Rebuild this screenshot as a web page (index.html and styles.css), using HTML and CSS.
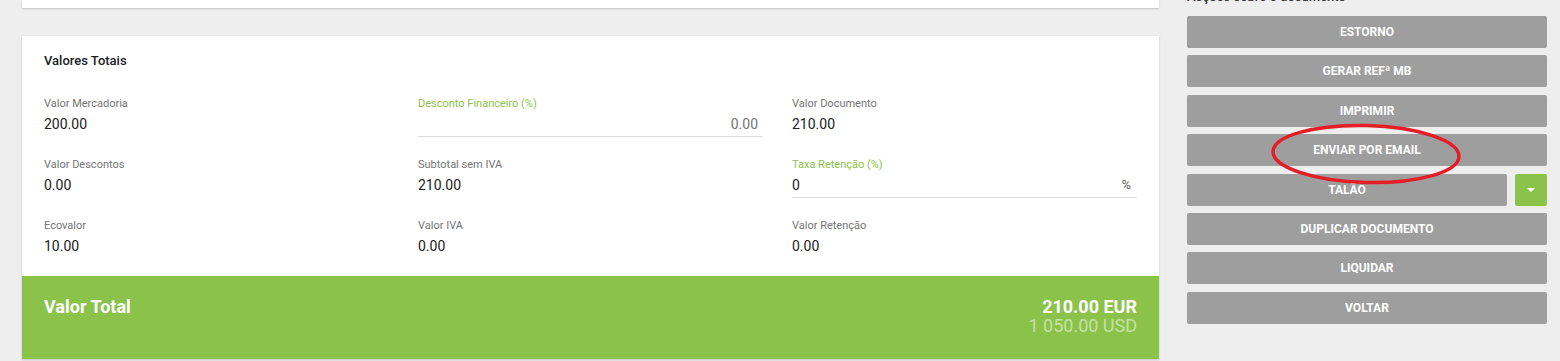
FILE: index.html
```html
<!DOCTYPE html>
<html lang="pt">
<head>
  <meta charset="UTF-8" />
  <title>Documento – Valores Totais</title>
  <link rel="stylesheet" href="styles.css">
</head>
<body>
  <div class="page">
    <div class="content">
      <div class="card card-top"></div>

      <div class="card totals">
        <div class="totals-body">
          <h3 class="card-title">Valores Totais</h3>
          <div class="fields">
            <div class="field">
              <div class="field-label">Valor Mercadoria</div>
              <div class="field-value">200.00</div>
            </div>
            <div class="field input">
              <div class="field-label green">Desconto Financeiro (%)</div>
              <div class="field-value muted right">0.00</div>
            </div>
            <div class="field">
              <div class="field-label">Valor Documento</div>
              <div class="field-value">210.00</div>
            </div>

            <div class="field">
              <div class="field-label">Valor Descontos</div>
              <div class="field-value">0.00</div>
            </div>
            <div class="field">
              <div class="field-label">Subtotal sem IVA</div>
              <div class="field-value">210.00</div>
            </div>
            <div class="field input">
              <div class="field-label green">Taxa Retenção (%)</div>
              <div class="field-value split"><span>0</span><span class="unit">%</span></div>
            </div>

            <div class="field">
              <div class="field-label">Ecovalor</div>
              <div class="field-value">10.00</div>
            </div>
            <div class="field">
              <div class="field-label">Valor IVA</div>
              <div class="field-value">0.00</div>
            </div>
            <div class="field">
              <div class="field-label">Valor Retenção</div>
              <div class="field-value">0.00</div>
            </div>
          </div>
        </div>

        <div class="total-bar">
          <div class="total-title">Valor Total</div>
          <div class="total-amounts">
            <div class="amount-main">210.00 EUR</div>
            <div class="amount-alt">1 050.00 USD</div>
          </div>
        </div>
      </div>
    </div>

    <div class="actions">
      <h4 class="actions-title">Acções sobre o documento</h4>
      <button class="action-btn">Estorno</button>
      <button class="action-btn">Gerar Refª MB</button>
      <button class="action-btn">Imprimir</button>
      <button class="action-btn">Enviar por email</button>
      <div class="btn-group">
        <button class="action-btn">Talão</button>
        <button class="drop-btn"><span class="caret"></span></button>
      </div>
      <button class="action-btn">Duplicar documento</button>
      <button class="action-btn">Liquidar</button>
      <button class="action-btn">Voltar</button>

      <svg class="mark" width="200" height="70" viewBox="0 0 200 70">
        <ellipse cx="100" cy="35" rx="93" ry="28.5" fill="none" stroke="#e31e26" stroke-width="3.5" transform="rotate(1.5 100 35)"/>
      </svg>
    </div>
  </div>
</body>
</html>
```

FILE: styles.css
```css
* { box-sizing: border-box; margin: 0; padding: 0; }
body {
  font-family: Roboto, 'Liberation Sans', sans-serif;
  background: #eeeeee;
  color: #212121;
  height: 100vh;
  overflow: hidden;
}

.page {
  display: flex;
  gap: 28px;
  padding-left: 22px;
}

.content {
  width: 1137px;
  display: flex;
  flex-direction: column;
  gap: 28px;
}
.card {
  background: #fff;
  box-shadow: 0 1px 2px rgba(0, 0, 0, 0.18);
}
.card-top { height: 8px; }

.totals-body { padding: 16px 22px 17px; }
.card-title {
  font-size: 13px;
  line-height: 17px;
  font-weight: 500;
  color: #212121;
  margin-bottom: 28px;
}
.fields {
  display: grid;
  grid-template-columns: repeat(3, 345px);
  column-gap: 29px;
  row-gap: 21px;
}
.field {
  border-bottom: 1px solid transparent;
  padding-bottom: 3px;
}
.field.input { border-bottom-color: #dcdcdc; }
.field-label {
  font-size: 11px;
  line-height: 14px;
  color: #757575;
  margin-bottom: 4px;
}
.field-label.green { color: #8bc34a; }
.field-value {
  font-size: 14px;
  line-height: 18px;
  color: #212121;
}
.field-value.muted { color: #757575; }
.field-value.right { text-align: right; padding-right: 5px; }
.field-value.split {
  display: flex;
  justify-content: space-between;
  padding-right: 6px;
}
.unit { color: #616161; font-size: 13px; }

.total-bar {
  background: #8bc34a;
  height: 83px;
  display: flex;
  justify-content: space-between;
  align-items: flex-start;
  padding: 20px 22px 0;
  color: #fff;
}
.total-title {
  font-size: 18px;
  line-height: 22px;
  font-weight: 700;
}
.total-amounts {
  text-align: right;
  padding-top: 1px;
  font-size: 18px;
  line-height: 19px;
}
.amount-main { font-weight: 700; }
.amount-alt { color: #c5e1a5; }

.actions {
  position: relative;
  width: 360px;
  display: flex;
  flex-direction: column;
  gap: 7.43px;
}
.actions-title {
  font-size: 13px;
  line-height: 16px;
  font-weight: 500;
  color: #333;
  margin-top: -11px;
  margin-bottom: 3.5px;
}
.action-btn {
  height: 32px;
  width: 100%;
  border: none;
  border-radius: 2px;
  background: #9e9e9e;
  color: #fff;
  font-family: Roboto, 'Liberation Sans', sans-serif;
  font-size: 12px;
  font-weight: 700;
  text-transform: uppercase;
  cursor: pointer;
}
.btn-group {
  display: flex;
  gap: 8px;
}
.btn-group .action-btn { flex: 1; }
.drop-btn {
  width: 32px;
  height: 32px;
  flex-shrink: 0;
  border: none;
  border-radius: 2px;
  background: #8bc34a;
  display: flex;
  align-items: center;
  justify-content: center;
  cursor: pointer;
}
.caret {
  width: 0;
  height: 0;
  border-left: 4px solid transparent;
  border-right: 4px solid transparent;
  border-top: 4px solid #fff;
}

.mark {
  position: absolute;
  left: 79px;
  top: 119px;
  pointer-events: none;
}
```
